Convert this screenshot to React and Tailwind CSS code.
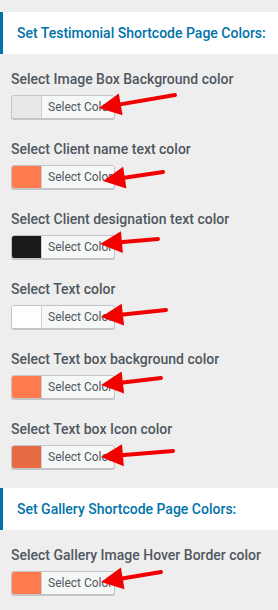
import React from 'react';

const testimonialRows = [
  { label: 'Select Image Box Background color', color: '#e8e8e8', arrow: { tip: [88, 13], tail: [164, 0] } },
  { label: 'Select Client name text color', color: '#ff7a4d', arrow: { tip: [92, 16], tail: [152, 7] } },
  { label: 'Select Client designation text color', color: '#1a1a1a', arrow: { tip: [89, 9], tail: [147, 4] } },
  { label: 'Select Text color', color: '#ffffff', arrow: { tip: [90, 12], tail: [155, 5] } },
  { label: 'Select Text box background color', color: '#ff7a4d', arrow: { tip: [90, 10], tail: [150, 3] } },
  { label: 'Select Text box Icon color', color: '#e86a42', arrow: { tip: [90, 12], tail: [162, 6] } },
];

const galleryRows = [
  { label: 'Select Gallery Image Hover Border color', color: '#ff7a4d', arrow: { tip: [90, 11], tail: [150, 1] } },
];

function Arrow({ tip, tail }) {
  // arrow drawn in a box anchored on the button's top-left corner
  const [tx, ty] = tip;
  const [ex, ey] = tail;
  const dx = ex - tx;
  const dy = ey - ty;
  const len = Math.sqrt(dx * dx + dy * dy);
  const ux = dx / len;
  const uy = dy / len;
  const headLen = 22;
  const headW = 11;
  const bx = tx + ux * headLen;
  const by = ty + uy * headLen;
  const p1 = [bx - uy * headW, by + ux * headW];
  const p2 = [bx + uy * headW, by - ux * headW];
  return (
    <svg className="absolute left-0 -top-3 pointer-events-none" width="200" height="50" viewBox="0 -12 200 50">
      <line x1={bx - ux * 2} y1={by - uy * 2} x2={ex} y2={ey} stroke="#f20000" strokeWidth="4" strokeLinecap="round" />
      <polygon points={`${tx},${ty} ${p1[0]},${p1[1]} ${p2[0]},${p2[1]}`} fill="#f20000" />
    </svg>
  );
}

function ColorRow({ label, color, arrow, last }) {
  return (
    <div className={last ? 'mb-[19px]' : 'mb-[21px]'}>
      <div className="text-[14px] leading-[18px] font-medium text-[#50575e]">{label}</div>
      <div className="relative mt-[7px] w-[104px]">
        <div className="flex h-[24px] w-[104px] rounded-[3px] border border-[#c3c4c7] bg-[#f6f7f7] shadow-[0_1px_0_#c3c4c7] overflow-hidden">
          <span className="w-[30px] border-r border-[#d0d0d0]" style={{ backgroundColor: color }} />
          <span className="pl-[6px] text-[12px] leading-[22px] text-[#50575e]">Select Color</span>
        </div>
        <Arrow {...arrow} />
      </div>
    </div>
  );
}

function SectionHeader({ title }) {
  return (
    <div className="h-[42px] bg-white border-l-[3px] border-[#0073aa] flex items-center pl-[14px]">
      <h2 className="text-[14px] font-medium text-[#0073aa]">{title}</h2>
    </div>
  );
}

export default function App() {
  return (
    <div className="w-[278px] h-[610px] bg-[#eeeeee] pt-3 overflow-hidden" style={{ fontFamily: 'Roboto, "Noto Sans", sans-serif' }}>
      <SectionHeader title="Set Testimonial Shortcode Page Colors:" />
      <div className="pt-4 pl-[11px]">
        {testimonialRows.map((row, i) => (
          <ColorRow key={row.label} {...row} last={i === testimonialRows.length - 1} />
        ))}
      </div>
      <SectionHeader title="Set Gallery Shortcode Page Colors:" />
      <div className="pt-4 pl-[11px]">
        {galleryRows.map((row) => (
          <ColorRow key={row.label} {...row} />
        ))}
      </div>
    </div>
  );
}
